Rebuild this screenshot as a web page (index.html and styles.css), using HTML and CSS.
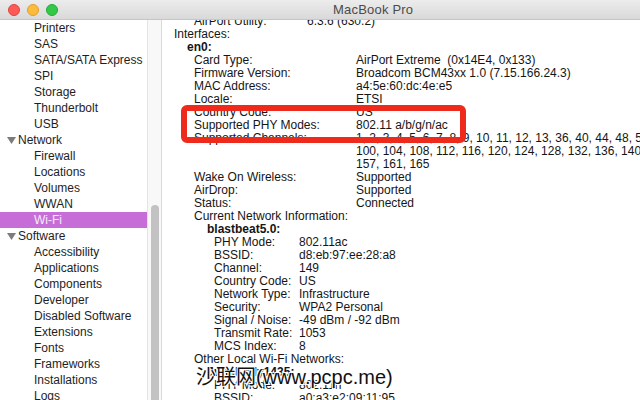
FILE: index.html
```html
<!DOCTYPE html>
<html>
<head>
<meta charset="utf-8">
<link rel="stylesheet" href="styles.css">
</head>
<body>
<div class="window">
  <div class="titlebar">
    <div class="lights">
      <span class="light red"></span>
      <span class="light yellow"></span>
      <span class="light green"></span>
    </div>
    <div class="title">MacBook Pro</div>
  </div>
  <div class="main">
    <div class="sidebar">
      <ul class="tree">
        <li class="item">Printers</li>
        <li class="item">SAS</li>
        <li class="item">SATA/SATA Express</li>
        <li class="item">SPI</li>
        <li class="item">Storage</li>
        <li class="item">Thunderbolt</li>
        <li class="item">USB</li>
        <li class="cat"><svg class="tri" width="9" height="7" viewBox="0 0 9 7"><path d="M0 0H9L4.5 7Z"/></svg>Network</li>
        <li class="item">Firewall</li>
        <li class="item">Locations</li>
        <li class="item">Volumes</li>
        <li class="item">WWAN</li>
        <li class="item selected">Wi-Fi</li>
        <li class="cat"><svg class="tri" width="9" height="7" viewBox="0 0 9 7"><path d="M0 0H9L4.5 7Z"/></svg>Software</li>
        <li class="item">Accessibility</li>
        <li class="item">Applications</li>
        <li class="item">Components</li>
        <li class="item">Developer</li>
        <li class="item">Disabled Software</li>
        <li class="item">Extensions</li>
        <li class="item">Fonts</li>
        <li class="item">Frameworks</li>
        <li class="item">Installations</li>
        <li class="item">Logs</li>
      </ul>
    </div>
    <div class="track"><div class="thumb"></div></div>
    <div class="content">
      <div class="rows">
        <div class="row l2"><span class="k kv">AirPort Utility:</span><span class="v">6.3.6 (630.2)</span></div>
        <div class="row l0"><span class="k">Interfaces:</span></div>
        <div class="row l1"><span class="k b">en0:</span></div>
        <div class="row l2"><span class="k">Card Type:</span><span class="v">AirPort Extreme&nbsp; (0x14E4, 0x133)</span></div>
        <div class="row l2"><span class="k">Firmware Version:</span><span class="v">Broadcom BCM43xx 1.0 (7.15.166.24.3)</span></div>
        <div class="row l2"><span class="k">MAC Address:</span><span class="v">a4:5e:60:dc:4e:e5</span></div>
        <div class="row l2"><span class="k">Locale:</span><span class="v">ETSI</span></div>
        <div class="row l2"><span class="k">Country Code:</span><span class="v">US</span></div>
        <div class="row l2"><span class="k">Supported PHY Modes:</span><span class="v">802.11 a/b/g/n/ac</span></div>
        <div class="row l2"><span class="k">Supported Channels:</span><span class="v">1, 2, 3, 4, 5, 6, 7, 8, 9, 10, 11, 12, 13, 36, 40, 44, 48, 52, 56, 60, 64,</span></div>
        <div class="row l2"><span class="k"></span><span class="v">100, 104, 108, 112, 116, 120, 124, 128, 132, 136, 140, 144, 149, 153,</span></div>
        <div class="row l2"><span class="k"></span><span class="v">157, 161, 165</span></div>
        <div class="row l2"><span class="k">Wake On Wireless:</span><span class="v">Supported</span></div>
        <div class="row l2"><span class="k">AirDrop:</span><span class="v">Supported</span></div>
        <div class="row l2"><span class="k">Status:</span><span class="v">Connected</span></div>
        <div class="row l2"><span class="k">Current Network Information:</span></div>
        <div class="row l3"><span class="k b">blastbeat5.0:</span></div>
        <div class="row l4"><span class="k">PHY Mode:</span><span class="v">802.11ac</span></div>
        <div class="row l4"><span class="k">BSSID:</span><span class="v">d8:eb:97:ee:28:a8</span></div>
        <div class="row l4"><span class="k">Channel:</span><span class="v">149</span></div>
        <div class="row l4"><span class="k">Country Code:</span><span class="v">US</span></div>
        <div class="row l4"><span class="k">Network Type:</span><span class="v">Infrastructure</span></div>
        <div class="row l4"><span class="k">Security:</span><span class="v">WPA2 Personal</span></div>
        <div class="row l4"><span class="k">Signal / Noise:</span><span class="v">-49 dBm / -92 dBm</span></div>
        <div class="row l4"><span class="k">Transmit Rate:</span><span class="v">1053</span></div>
        <div class="row l4"><span class="k">MCS Index:</span><span class="v">8</span></div>
        <div class="row l2"><span class="k">Other Local Wi-Fi Networks:</span></div>
        <div class="row l3"><span class="k b">JuneKelly1435:</span></div>
        <div class="row l4"><span class="k">PHY Mode:</span><span class="v">802.11n</span></div>
        <div class="row l4"><span class="k">BSSID:</span><span class="v">a0:a3:e2:09:11:95</span></div>
      </div>
      <div class="callout"></div>
      <div class="watermark">沙联网(www.pcpc.me)</div>
    </div>
  </div>
</div>
</body>
</html>
```
FILE: styles.css
```css
html, body {
  margin: 0;
  padding: 0;
  width: 640px;
  height: 400px;
  overflow: hidden;
  background: #ffffff;
  font-family: "Liberation Sans", Arial, sans-serif;
}

.window {
  display: flex;
  flex-direction: column;
  width: 640px;
  height: 400px;
  overflow: hidden;
}

.titlebar {
  position: relative;
  z-index: 2;
  flex: 0 0 20px;
  height: 20px;
  box-sizing: border-box;
  display: flex;
  align-items: center;
  background: linear-gradient(#ececec, #d9d9d9);
  border-bottom: 1px solid #c6c6c6;
}

.lights {
  display: flex;
  gap: 7px;
  padding-left: 8px;
}

.light {
  width: 12px;
  height: 12px;
  border-radius: 50%;
  box-sizing: border-box;
}

.red { background: #fc5b57; border: 1px solid #e0443f; }
.yellow { background: #fdbb3c; border: 1px solid #dea131; }
.green { background: #34c84a; border: 1px solid #27aa38; }

.title {
  margin-left: 275px;
  font-size: 13px;
  color: #4b4b4b;
  letter-spacing: 0.2px;
}

.main {
  flex: 1;
  display: flex;
  min-height: 0;
}

.sidebar {
  width: 147px;
  flex: 0 0 147px;
  overflow: hidden;
  border-right: 1px solid #e4e4e4;
  background: #ffffff;
}

.tree {
  list-style: none;
  margin: 0;
  padding: 0;
  font-size: 12px;
  color: #1e1e1e;
}

.tree li {
  height: 16px;
  line-height: 16px;
  white-space: nowrap;
}

.item {
  padding-left: 34px;
}

.cat {
  display: flex;
  align-items: center;
  padding-left: 7px;
  gap: 2px;
}

.tri {
  fill: #7c7c7c;
}

.selected {
  background: #c76dd8;
  color: #f6ecf8;
}

.track {
  width: 14px;
  flex: 0 0 14px;
  background: #f8f8f8;
  border-right: 1px solid #dadada;
  padding-top: 185px;
  box-sizing: border-box;
  overflow: hidden;
}

.thumb {
  margin-left: 3px;
  width: 8px;
  height: 240px;
  border-radius: 4px;
  background: #c2c2c2;
}

.content {
  position: relative;
  flex: 1;
  overflow: hidden;
  background: #ffffff;
}

.rows {
  margin-top: -5px;
  font-size: 12px;
  color: #151515;
}

.row {
  display: flex;
  height: 13px;
  line-height: 13px;
  white-space: nowrap;
}

.b { font-weight: bold; }

.l0 { padding-left: 12px; }
.l1 { padding-left: 25px; }
.l2 { padding-left: 32px; }
.l3 { padding-left: 45px; }
.l4 { padding-left: 52px; }

.l2 .k { flex: 0 0 162px; }
.l2 .kv { flex: 0 0 113px; }
.l4 .k { flex: 0 0 85px; }
.l2 .k:only-child, .l4 .k:only-child { flex: none; }

.callout {
  position: absolute;
  left: 19px;
  top: 85px;
  width: 285px;
  height: 38px;
  box-sizing: border-box;
  border: 6px solid #ee2a1c;
  border-radius: 6px;
}

.watermark {
  position: absolute;
  left: 34px;
  top: 345px;
  font-family: "Liberation Sans", "Noto Sans CJK SC", sans-serif;
  font-size: 20px;
  line-height: 24px;
  color: #111111;
  white-space: nowrap;
  text-shadow: 1px 1px 0 #fff, -1px -1px 0 #fff, 1px -1px 0 #fff, -1px 1px 0 #fff;
}
```
